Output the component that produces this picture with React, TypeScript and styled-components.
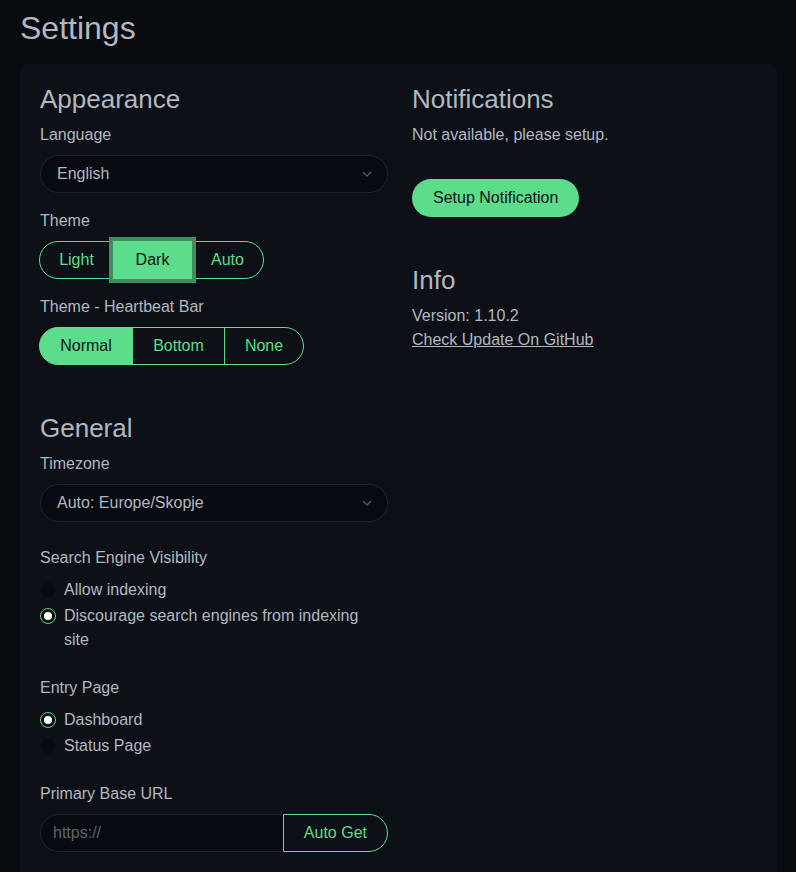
import styled, { createGlobalStyle } from "styled-components";

const GlobalStyle = createGlobalStyle`
  html, body {
    margin: 0;
    padding: 0;
    background-color: #090c10;
    color: #b1b8c0;
    font-family: "Liberation Sans", Arial, sans-serif;
    font-size: 16px;
    line-height: 1.5;
  }

  * {
    box-sizing: border-box;
  }
`;

const Page = styled.div`
  padding: 0 19px 0 20px;
`;

const Title = styled.h1`
  font-size: 32px;
  font-weight: 400;
  line-height: 1.2;
  margin: 0;
  padding: 9px 0 16px 0;
`;

const Card = styled.div`
  background-color: #0d1117;
  border-radius: 10px;
  box-shadow: 0 15px 70px rgba(0, 0, 0, 0.1);
  padding: 21px 20px 20px 20px;
  display: grid;
  grid-template-columns: 348px 1fr;
  column-gap: 24px;
  min-height: 900px;
`;

const Column = styled.div`
  display: flex;
  flex-direction: column;
`;

const Heading = styled.h4<{ $top?: number }>`
  font-size: 26px;
  font-weight: 400;
  line-height: 1.2;
  margin: ${(p) => p.$top ?? 0}px 0 7px 0;
`;

const Label = styled.div<{ $top?: number }>`
  margin-top: ${(p) => p.$top ?? 0}px;
  margin-bottom: 8px;
`;

const SelectBox = styled.div`
  display: flex;
  align-items: center;
  justify-content: space-between;
  height: 38px;
  padding: 0 14px 0 16px;
  border: 1px solid #1d2634;
  border-radius: 19px;
  background-color: #070a10;
  color: #b1b8c0;
`;

const Chevron = () => (
  <svg width="12" height="8" viewBox="0 0 12 8" fill="none">
    <path d="M2 2l4 4 4-4" stroke="#4b5462" strokeWidth="1.5" />
  </svg>
);

const Group = styled.div`
  display: flex;
  align-self: flex-start;
  margin-left: -1px;
`;

const GroupButton = styled.div<{ $active?: boolean; $focus?: boolean; $w: number }>`
  position: relative;
  width: ${(p) => p.$w}px;
  height: 38px;
  display: flex;
  align-items: center;
  justify-content: center;
  border: 1px solid #5cdd8b;
  margin-left: -1px;
  color: ${(p) => (p.$active ? "#0d1117" : "#5cdd8b")};
  background-color: ${(p) => (p.$active ? "#5cdd8b" : "transparent")};
  box-shadow: ${(p) => (p.$focus ? "0 0 0 4px #3e8f5d" : "none")};
  z-index: ${(p) => (p.$focus ? 1 : 0)};

  &:first-child {
    margin-left: 0;
    border-radius: 19px 0 0 19px;
  }

  &:last-child {
    border-radius: 0 19px 19px 0;
  }
`;

const RadioRow = styled.div`
  display: flex;
  align-items: flex-start;
  gap: 8px;
  line-height: 24px;
  margin-bottom: 2px;
  padding-right: 6px;
`;

const RadioDot = styled.span<{ $checked?: boolean }>`
  flex: none;
  width: 16px;
  height: 16px;
  margin-top: 4px;
  border-radius: 50%;
  background-color: #070a10;
  border: 1px solid ${(p) => (p.$checked ? "#5cdd8b" : "#0b0f16")};
  display: flex;
  align-items: center;
  justify-content: center;

  &::after {
    content: "";
    display: ${(p) => (p.$checked ? "block" : "none")};
    width: 8px;
    height: 8px;
    border-radius: 50%;
    background-color: #fff;
  }
`;

const InputGroup = styled.div`
  display: flex;
  height: 38px;
`;

const UrlInput = styled.div`
  flex: 1;
  display: flex;
  align-items: center;
  padding: 0 12px;
  border: 1px solid #1d2634;
  border-right: none;
  border-radius: 19px 0 0 19px;
  background-color: #070a10;
  color: #5d646d;
`;

const OutlineButton = styled.div`
  display: flex;
  align-items: center;
  padding: 0 20px;
  border: 1px solid #5cdd8b;
  border-radius: 0 19px 19px 0;
  color: #5cdd8b;
`;

const PrimaryButton = styled.div`
  align-self: flex-start;
  margin-top: 32px;
  height: 38px;
  display: flex;
  align-items: center;
  padding: 0 21px;
  border-radius: 19px;
  background-color: #5cdd8b;
  color: #0d1117;
`;

const Text = styled.div<{ $top?: number }>`
  margin-top: ${(p) => p.$top ?? 0}px;
`;

const Link = styled.a`
  color: #b1b8c0;
  text-decoration: underline;
  align-self: flex-start;
`;

const Radio = ({ checked, children }: { checked?: boolean; children: React.ReactNode }) => (
  <RadioRow>
    <RadioDot $checked={checked} />
    <span>{children}</span>
  </RadioRow>
);

export default function App() {
  return (
    <>
      <GlobalStyle />
      <Page>
        <Title>Settings</Title>
        <Card>
          <Column>
            <Heading>Appearance</Heading>
            <Label>Language</Label>
            <SelectBox>
              English
              <Chevron />
            </SelectBox>

            <Label $top={16}>Theme</Label>
            <Group>
              <GroupButton $w={75}>Light</GroupButton>
              <GroupButton $w={79} $active $focus>
                Dark
              </GroupButton>
              <GroupButton $w={73}>Auto</GroupButton>
            </Group>

            <Label $top={16}>Theme - Heartbeat Bar</Label>
            <Group>
              <GroupButton $w={94} $active>
                Normal
              </GroupButton>
              <GroupButton $w={93}>Bottom</GroupButton>
              <GroupButton $w={80}>None</GroupButton>
            </Group>

            <Heading $top={48}>General</Heading>
            <Label $top={1}>Timezone</Label>
            <SelectBox>
              Auto: Europe/Skopje
              <Chevron />
            </SelectBox>

            <Label $top={24}>Search Engine Visibility</Label>
            <Radio>Allow indexing</Radio>
            <Radio checked>Discourage search engines from indexing site</Radio>

            <Label $top={22}>Entry Page</Label>
            <Radio checked>Dashboard</Radio>
            <Radio>Status Page</Radio>

            <Label $top={22}>Primary Base URL</Label>
            <InputGroup>
              <UrlInput>https://</UrlInput>
              <OutlineButton>Auto Get</OutlineButton>
            </InputGroup>
          </Column>

          <Column>
            <Heading>Notifications</Heading>
            <Text>Not available, please setup.</Text>
            <PrimaryButton>Setup Notification</PrimaryButton>

            <Heading $top={48}>Info</Heading>
            <Text $top={1}>Version: 1.10.2</Text>
            <Link>Check Update On GitHub</Link>
          </Column>
        </Card>
      </Page>
    </>
  );
}
